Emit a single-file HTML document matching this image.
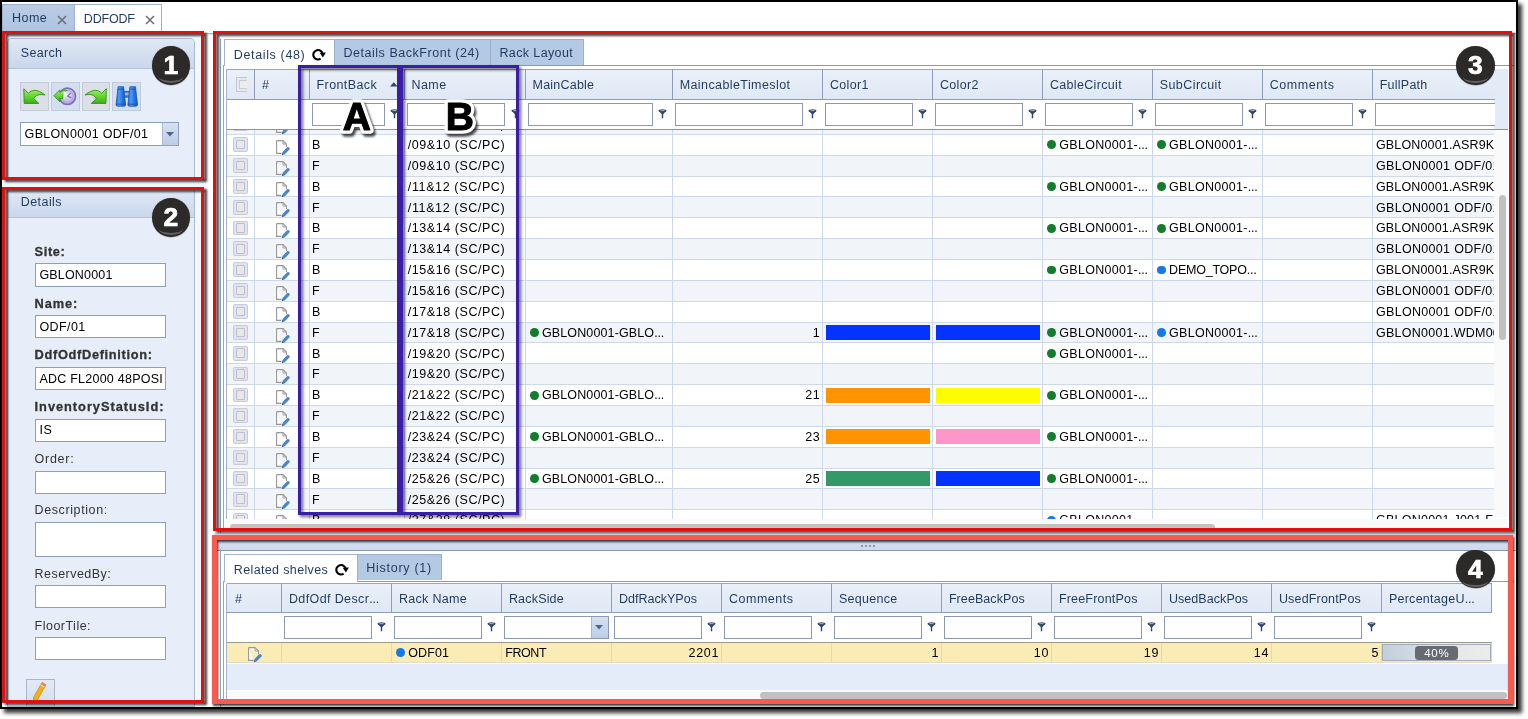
<!DOCTYPE html>
<html><head><meta charset="utf-8"><title>DDFODF</title>
<style>
*{box-sizing:border-box;margin:0;padding:0}
html,body{width:1528px;height:719px;overflow:hidden;background:#fff}
body{font-family:"Liberation Sans",sans-serif;font-size:12.5px;color:#000;position:relative}
#w{left:0;top:0;width:1528px;height:719px;will-change:transform}
.a{position:absolute}
.t{position:absolute;white-space:nowrap;line-height:16px;height:16px}
#frame{left:0;top:0;width:1518px;height:709px;border:2px solid #000;background:#fff;box-shadow:4px 4px 4px rgba(0,0,0,.8)}
.tab{top:3.5px;height:27px;border:1px solid #9db1cf;border-bottom:none}
.hd{color:#1f3a5f}
.panel{border:1px solid #a3b6d3;background:#e8eef9}
.phead{left:0;top:0;right:0;height:30px;background:linear-gradient(#e0e8f5,#cad7eb);border-bottom:1px solid #b4c3dc}
.btn{width:28.5px;height:28.5px;top:82px;border:1px solid #c2cbdb}
.inp{background:#fff;border:1px solid #8e9fbc;height:23px}
.red{border:3.3px solid #e01010;filter:drop-shadow(3px 2px 1px rgba(0,0,0,.75))}
.red4{border:5px solid #fa5a4d;filter:drop-shadow(1.5px 2px .8px rgba(0,0,0,.75))}
.blue{border:3.4px solid #3a1ea8;filter:drop-shadow(2px 2px 1.5px rgba(0,0,0,.6))}
.circ{width:38.4px;height:38.8px;border-radius:50%;background:#2b2a29;box-shadow:0 .5px 1px rgba(0,0,0,.4)}
.circ b{position:absolute;left:0;right:0;top:0;color:#fff;font-weight:bold;font-size:26.5px;line-height:38.8px;text-align:center;-webkit-text-stroke:.7px #fff}
.circ:after{content:"";position:absolute;left:7px;right:7px;bottom:1.3px;height:10px;border-bottom:2px solid #626262;border-radius:50%}
.gh{height:30.5px;background:linear-gradient(#eaf0f9,#dfe8f5);border-right:1px solid #98a7c3;border-bottom:1px solid #8d9cb9;border-top:1px solid #98a7c3}
.fi{background:#fff;border:1px solid #8e98b0;height:23px}
.row{left:0;height:20.86px;border-bottom:1px solid #cdd8ea}
.cell{top:0;height:20.86px;border-right:1px solid #cdd8ea;overflow:hidden}
.cell .t{top:2.2px}
.alt{background:#f1f4f9}
.dot{position:absolute;width:8.8px;height:8.8px;border-radius:50%;top:5.6px;left:4.8px}
.g{background:#127d2c}.bl{background:#1479ea}
.bar{position:absolute;left:3px;right:2px;top:2.5px;height:15px}
.cb{left:6.6px;top:2.4px;width:14.8px;height:14.8px;border:1px solid #c6cad9;background:#e1e4ee;border-radius:1.5px}
.cb:after{content:"";position:absolute;left:1.6px;top:1.6px;right:1.6px;bottom:1.6px;border:1px solid #bcc0cd;background:#e8e8ec;border-radius:1px}
.bl2{-webkit-text-stroke:.3px #333}
.big{font-weight:bold;font-size:40px;letter-spacing:0;line-height:40px;height:40px}
.big.o{color:#fff;-webkit-text-stroke:7px #fff;filter:drop-shadow(2px 3px 1.5px rgba(0,0,0,.65))}
.big.f{color:#000;-webkit-text-stroke:1px #000}
</style></head>
<body>
<div id="w" class="a">
<div id="frame" class="a"></div>
<div class="a" style="left:2px;top:32.5px;width:1514px;height:3px;background:#e6edf8;border-top:1px solid #9db1cf"></div>
<div class="a tab" style="left:2px;width:73px;background:linear-gradient(#b9cce5,#aec4e0)"></div>
<div class="a tab" style="left:74px;width:88px;background:#fff"></div>
<div class="t hd" style="top:9.5px;font-size:12.5px;left:12px"><span style="letter-spacing:0.45px">Home</span></div>
<div class="t hd" style="top:10.9px;font-size:12.5px;left:83.8px"><span style="letter-spacing:-0.18px">DDFODF</span></div>
<svg class="a" style="left:56.5px;top:15px" width="10" height="10" viewBox="0 0 10 10"><path d="M1 1l8 8M9 1l-8 8" stroke="#6b6f78" stroke-width="1.600"/></svg>
<svg class="a" style="left:144.5px;top:15px" width="10" height="10" viewBox="0 0 10 10"><path d="M1 1l8 8M9 1l-8 8" stroke="#6b6f78" stroke-width="1.600"/></svg>
<div class="a" style="left:2px;top:35px;width:204px;height:672px;background:#f3f6fb"></div>
<div class="a" style="left:205.5px;top:35px;width:8px;height:672px;background:#fff"></div>
<div class="a panel" style="left:7px;top:38px;width:187.800px;height:142px;border-bottom:none;border-radius:5px 5px 0 0;border-color:#aab9d4"><div class="a phead" style="border-radius:4px 4px 0 0"></div></div>
<div class="t hd" style="top:45.4px;font-size:12.5px;left:20.8px"><span style="letter-spacing:0.32px">Search</span></div>
<div class="a btn" style="left:20px;width:28.5px;background:#dcdfe6"></div>
<div class="a btn" style="left:51.2px;width:28.5px;background:#d3deef"></div>
<div class="a btn" style="left:82.2px;width:27.5px;background:#dcdfe6"></div>
<div class="a btn" style="left:112.2px;width:28.5px;background:#d3deef"></div>
<svg width="0" height="0" class="a"><defs><linearGradient id="gg" x1="0" y1="0" x2="0" y2="1"><stop offset="0" stop-color="#a6f070"/><stop offset=".55" stop-color="#5fd52c"/><stop offset="1" stop-color="#3fae18"/></linearGradient><linearGradient id="bb" x1="0" y1="0" x2="1" y2="0"><stop offset="0" stop-color="#1b5fc9"/><stop offset=".3" stop-color="#4b9bff"/><stop offset=".6" stop-color="#2a7be8"/><stop offset="1" stop-color="#1854b8"/></linearGradient><radialGradient id="pp" cx=".45" cy=".4" r=".6"><stop offset="0" stop-color="#ece8fa"/><stop offset=".7" stop-color="#c4b9ea"/><stop offset="1" stop-color="#a89ad8"/></radialGradient></defs></svg>
<svg class="a" style="left:20.2px;top:82.2px" width="28.500" height="28.500" viewBox="0 0 28.500 28.500"><path d="M3.800 6.700L8.400 11.300C11.200 8 17 6.300 25.100 13C19.500 11.600 15.600 13 13.800 16.800L18.800 21.400H4.200z" fill="url(#gg)" stroke="#2f8d14" stroke-width=".9" stroke-linejoin="round"/></svg>
<svg class="a" style="left:51.3px;top:82.2px" width="28.500" height="28.500" viewBox="0 0 28.500 28.500"><circle cx="16.400" cy="14.300" r="8.200" fill="url(#pp)" stroke="#7d6db8" stroke-width="1.600"/><circle cx="16.400" cy="14.300" r="5.700" fill="none" stroke="#b3a7e0" stroke-width="1"/><path d="M16.400 14.300l3.300-3.500M16.400 14.300l3.800 1.300" stroke="#7a6bb3" stroke-width="1.200"/><path d="M2.900 13.800L8.800 7.900V10.600C11 8.600 13.500 8 16.200 8.400C13.600 10 12 12.500 11.600 16.600L8.800 16.600V19.800z" fill="url(#gg)" stroke="#2f8d14" stroke-width=".8" stroke-linejoin="round"/><path d="M12.400 10.600l3.400-1.600-2 3.400 2.200.3-3.400 3z" fill="#f6fff2"/></svg>
<svg class="a" style="left:82.1px;top:82.2px" width="28.500" height="28.500" viewBox="0 0 28.500 28.500"><g transform="translate(28.100 0) scale(-1 1)"><path d="M3.800 6.700L8.400 11.300C11.200 8 17 6.300 25.100 13C19.500 11.600 15.600 13 13.800 16.800L18.800 21.400H4.200z" fill="url(#gg)" stroke="#2f8d14" stroke-width=".9" stroke-linejoin="round"/></g></svg>
<svg class="a" style="left:112.2px;top:82.2px" width="28.500" height="28.500" viewBox="0 0 28.500 28.500"><rect x="10.800" y="9.200" width="7.400" height="6" fill="#2a7be8" stroke="#154fae" stroke-width=".6"/><rect x="11.900" y="10.600" width="5.200" height="2.800" fill="#a9b1c2" stroke="#6f7a92" stroke-width=".5"/><path d="M6 4.700h5.600l2 17.600c.1 1.300-.5 2-1.700 2H5.900c-1.200 0-1.900-.7-1.800-2z" fill="url(#bb)" stroke="#154fae" stroke-width=".7"/><path d="M17.900 4.700h5.600l2 17.600c.1 1.300-.6 2-1.800 2h-6.100c-1.200 0-1.800-.7-1.700-2z" fill="url(#bb)" stroke="#154fae" stroke-width=".7"/><path d="M5.700 7.200h6.200M17.600 7.200h6.200M4.200 22.200h9.400M15.900 22.200h9.600" stroke="#1650b0" stroke-width=".8"/></svg>
<div class="a inp" style="left:20px;top:122.3px;width:159px;height:23.400px"></div>
<div class="t " style="top:126px;font-size:12.5px;left:24.6px"><span style="letter-spacing:0.31px">GBLON0001 ODF/01</span></div>
<div class="a" style="left:161.5px;top:123.3px;width:16.500px;height:21.400px;background:linear-gradient(#d6e1f1,#bccde6);border-left:1px solid #a9b9d3"></div>
<svg class="a" style="left:166px;top:131.5px" width="8" height="5" viewBox="0 0 8 5"><path d="M0 0h8l-4 4.500z" fill="#4c6690"/></svg>
<div class="a panel" style="left:7px;top:190px;width:187.800px;height:517px;border-color:#aab9d4;border-top:none;background:#e8eef9"><div class="a phead" style="height:28px"></div></div>
<div class="t hd" style="top:194.4px;font-size:12.5px;left:20.8px"><span style="letter-spacing:0.42px">Details</span></div>
<div class="t bl2" style="top:243.7px;font-size:12.8px;left:34.6px;font-weight:bold;color:#333"><span style="letter-spacing:0.63px">Site:</span></div>
<div class="a inp" style="left:34.8px;top:263.3px;width:131px;height:23.4px;overflow:hidden"><div class="t " style="top:2.7px;font-size:12.5px;left:3.6px"><span style="letter-spacing:0.18px">GBLON0001</span></div></div>
<div class="t bl2" style="top:295.7px;font-size:12.8px;left:34.6px;font-weight:bold;color:#333"><span style="letter-spacing:0.91px">Name:</span></div>
<div class="a inp" style="left:34.8px;top:315px;width:131px;height:23.4px;overflow:hidden"><div class="t " style="top:2.7px;font-size:12.5px;left:3.6px"><span style="letter-spacing:0.42px">ODF/01</span></div></div>
<div class="t bl2" style="top:346.7px;font-size:12.8px;left:34.6px;font-weight:bold;color:#333"><span style="letter-spacing:0.67px">DdfOdfDefinition:</span></div>
<div class="a inp" style="left:34.8px;top:367px;width:131px;height:23.4px;overflow:hidden"><div class="t " style="top:2.7px;font-size:12.5px;left:3.6px"><span style="letter-spacing:0.24px">ADC FL2000 48POSI</span></div></div>
<div class="t bl2" style="top:398.7px;font-size:12.8px;left:34.6px;font-weight:bold;color:#333"><span style="letter-spacing:0.97px">InventoryStatusId:</span></div>
<div class="a inp" style="left:34.8px;top:418.8px;width:131px;height:23.4px;overflow:hidden"><div class="t " style="top:2.7px;font-size:12.5px;left:3.6px"><span style="letter-spacing:0.72px">IS</span></div></div>
<div class="t " style="top:450.7px;font-size:12.5px;left:34.6px;color:#333"><span style="letter-spacing:0.72px">Order:</span></div>
<div class="a inp" style="left:34.8px;top:470.5px;width:131px;height:23.4px;overflow:hidden"></div>
<div class="t " style="top:502.2px;font-size:12.5px;left:34.6px;color:#333"><span style="letter-spacing:0.60px">Description:</span></div>
<div class="a inp" style="left:34.8px;top:522px;width:131px;height:34.5px;overflow:hidden"></div>
<div class="t " style="top:565.7px;font-size:12.5px;left:34.6px;color:#333"><span style="letter-spacing:0.45px">ReservedBy:</span></div>
<div class="a inp" style="left:34.8px;top:585px;width:131px;height:23.4px;overflow:hidden"></div>
<div class="t " style="top:617.7px;font-size:12.5px;left:34.6px;color:#333"><span style="letter-spacing:0.48px">FloorTile:</span></div>
<div class="a inp" style="left:34.8px;top:637px;width:131px;height:23.4px;overflow:hidden"></div>
<div class="a" style="left:26.2px;top:679.3px;width:28.700px;height:28px;border:1px solid #a9b6cc;background:linear-gradient(#e3eaf6,#d3deef)"></div>
<svg class="a" style="left:32px;top:681px" width="16" height="20" viewBox="0 0 16 20"><path d="M10 1.500l4 2.200-8.500 15-3.800 1.800-.2-4z" fill="#f2b01e" stroke="#c98508" stroke-width=".7"/><path d="M10 1.500l4 2.200-1.200 2.100-4-2.200z" fill="#e88478"/><path d="M8.600 3.900l4 2.200" stroke="#eee" stroke-width="1"/></svg>
<div class="a" style="left:214px;top:35px;width:1302px;height:505px;background:#fff"></div>
<div class="a" style="left:220px;top:38.5px;width:1296px;height:495px;border-left:1px solid #8fa3c4;background:#fff"></div>
<div class="a" style="left:223.1px;top:65px;width:1px;height:466px;background:#97a3b9"></div>
<div class="a" style="left:224px;top:64.8px;width:1290px;height:1px;background:#8c9ab3"></div>
<div class="a" style="left:224.3px;top:38.8px;width:110.500px;height:27.700px;background:#fff;border:1px solid #a3b4d0;border-bottom:none"></div>
<div class="t hd" style="top:46.9px;font-size:12.5px;left:233.8px"><span style="letter-spacing:0.64px">Details (48)</span></div>
<svg class="a" style="left:312px;top:47.8px" width="15" height="14" viewBox="0 0 15 14"><path d="M8.600 10.700A4.700 4.700 0 1 1 10.700 6.200" fill="none" stroke="#000" stroke-width="2.100"/><path d="M7.700 4.700l6.200-.2-3 4.900z" fill="#000"/></svg>
<div class="a" style="left:334.3px;top:38.8px;width:156.500px;height:26.200px;background:#b4c9e4;border:1px solid #9db1cf;border-bottom:none"></div>
<div class="t hd" style="top:45.4px;font-size:12.5px;left:343.4px"><span style="letter-spacing:0.54px">Details BackFront (24)</span></div>
<div class="a" style="left:489.8px;top:38.8px;width:94px;height:26.200px;background:#b4c9e4;border:1px solid #9db1cf;border-bottom:none"></div>
<div class="t hd" style="top:45.4px;font-size:12.5px;left:499.4px"><span style="letter-spacing:0.39px">Rack Layout</span></div>
<div class="a" style="left:226.5px;top:69px;width:1281.5px;height:61px;background:#e3ebf7;border-bottom:1px solid #8492ae"></div>
<div class="a" style="left:226.5px;top:99.5px;width:1267.5px;height:29.900px;background:#fff"></div>
<div class="a" style="left:226.0px;top:69px;width:1px;height:450px;background:#a3b3cf"></div>
<div class="a gh" style="left:226.7px;top:69px;width:28.4px"></div>
<div class="a gh" style="left:254.5px;top:69px;width:55.5px"></div>
<div class="t hd" style="top:76.5px;font-size:12.5px;left:262.1px"><span style="letter-spacing:2.86px">#</span></div>
<div class="a gh" style="left:309.4px;top:69px;width:95.5px"></div>
<div class="t hd" style="top:76.5px;font-size:12.5px;left:316.59999999999997px"><span style="letter-spacing:0.39px">FrontBack</span></div>
<div class="a gh" style="left:404.3px;top:69px;width:121.6px"></div>
<div class="t hd" style="top:76.5px;font-size:12.5px;left:411.5px"><span style="letter-spacing:0.42px">Name</span></div>
<div class="a gh" style="left:525.3px;top:69px;width:147.8px"></div>
<div class="t hd" style="top:76.5px;font-size:12.5px;left:532.5px"><span style="letter-spacing:0.22px">MainCable</span></div>
<div class="a gh" style="left:672.5px;top:69px;width:150.8px"></div>
<div class="t hd" style="top:76.5px;font-size:12.5px;left:679.7px"><span style="letter-spacing:0.41px">MaincableTimeslot</span></div>
<div class="a gh" style="left:822.7px;top:69px;width:110.6px"></div>
<div class="t hd" style="top:76.5px;font-size:12.5px;left:829.9000000000001px"><span style="letter-spacing:0.36px">Color1</span></div>
<div class="a gh" style="left:932.7px;top:69px;width:110.6px"></div>
<div class="t hd" style="top:76.5px;font-size:12.5px;left:939.9000000000001px"><span style="letter-spacing:0.36px">Color2</span></div>
<div class="a gh" style="left:1042.7px;top:69px;width:110.4px"></div>
<div class="t hd" style="top:76.5px;font-size:12.5px;left:1049.9px"><span style="letter-spacing:0.34px">CableCircuit</span></div>
<div class="a gh" style="left:1152.5px;top:69px;width:110.6px"></div>
<div class="t hd" style="top:76.5px;font-size:12.5px;left:1159.7px"><span style="letter-spacing:0.43px">SubCircuit</span></div>
<div class="a gh" style="left:1262.5px;top:69px;width:110.6px"></div>
<div class="t hd" style="top:76.5px;font-size:12.5px;left:1269.7px"><span style="letter-spacing:0.54px">Comments</span></div>
<div class="a gh" style="left:1372.5px;top:69px;width:122.1px;border-right:none"></div>
<div class="t hd" style="top:76.5px;font-size:12.5px;left:1379.7px"><span style="letter-spacing:0.25px">FullPath</span></div>
<div class="a" style="left:254.0px;top:69px;width:1px;height:30.500px;background:#8f9dba"></div>
<div class="a" style="left:308.9px;top:69px;width:1px;height:30.500px;background:#8f9dba"></div>
<div class="a" style="left:403.8px;top:69px;width:1px;height:30.500px;background:#8f9dba"></div>
<div class="a" style="left:524.8px;top:69px;width:1px;height:30.500px;background:#8f9dba"></div>
<div class="a" style="left:672.0px;top:69px;width:1px;height:30.500px;background:#8f9dba"></div>
<div class="a" style="left:822.2px;top:69px;width:1px;height:30.500px;background:#8f9dba"></div>
<div class="a" style="left:932.2px;top:69px;width:1px;height:30.500px;background:#8f9dba"></div>
<div class="a" style="left:1042.2px;top:69px;width:1px;height:30.500px;background:#8f9dba"></div>
<div class="a" style="left:1152.0px;top:69px;width:1px;height:30.500px;background:#8f9dba"></div>
<div class="a" style="left:1262.0px;top:69px;width:1px;height:30.500px;background:#8f9dba"></div>
<div class="a" style="left:1372.0px;top:69px;width:1px;height:30.500px;background:#8f9dba"></div>
<div class="a" style="left:236.3px;top:77.3px;width:11px;height:14.500px;border:1px solid #c3c9d6;border-right:none;background:#e4e8f0"><div class="a" style="left:1.500px;top:1.500px;right:0;bottom:1.500px;border:1px solid #c8ccd6;border-right:none;background:#eeeee8"></div></div>
<svg class="a" style="left:389.8px;top:82.2px" width="8" height="5" viewBox="0 0 8 5"><path d="M0 4.500h7.600l-3.800-4.300z" fill="#2b466f"/></svg>
<div class="a fi" style="left:312.0px;top:103.2px;width:72.50000000000003px;height:22.800px"></div>
<svg class="a" style="left:389.5px;top:108.8px" width="9" height="10" viewBox="0 0 9 10"><path d="M.6 1.6h7.800L5.200 5.300v3.900h-1.400V5.300z" fill="#2f4566"/><ellipse cx="4.500" cy="1.700" rx="3.900" ry="1.500" fill="#33496b"/><ellipse cx="4.500" cy="1.500" rx="2.300" ry=".7" fill="#94a4bd"/></svg>
<div class="a fi" style="left:406.90000000000003px;top:103.2px;width:98.59999999999994px;height:22.800px"></div>
<svg class="a" style="left:510.49999999999994px;top:108.8px" width="9" height="10" viewBox="0 0 9 10"><path d="M.6 1.6h7.800L5.200 5.300v3.900h-1.400V5.300z" fill="#2f4566"/><ellipse cx="4.500" cy="1.700" rx="3.900" ry="1.500" fill="#33496b"/><ellipse cx="4.500" cy="1.500" rx="2.300" ry=".7" fill="#94a4bd"/></svg>
<div class="a fi" style="left:527.9px;top:103.2px;width:124.8000000000001px;height:22.800px"></div>
<svg class="a" style="left:657.7px;top:108.8px" width="9" height="10" viewBox="0 0 9 10"><path d="M.6 1.6h7.800L5.200 5.300v3.900h-1.400V5.300z" fill="#2f4566"/><ellipse cx="4.500" cy="1.700" rx="3.900" ry="1.500" fill="#33496b"/><ellipse cx="4.500" cy="1.500" rx="2.300" ry=".7" fill="#94a4bd"/></svg>
<div class="a fi" style="left:675.1px;top:103.2px;width:127.8000000000001px;height:22.800px"></div>
<svg class="a" style="left:807.9000000000001px;top:108.8px" width="9" height="10" viewBox="0 0 9 10"><path d="M.6 1.6h7.800L5.200 5.300v3.900h-1.400V5.300z" fill="#2f4566"/><ellipse cx="4.500" cy="1.700" rx="3.900" ry="1.500" fill="#33496b"/><ellipse cx="4.500" cy="1.500" rx="2.300" ry=".7" fill="#94a4bd"/></svg>
<div class="a fi" style="left:825.3000000000001px;top:103.2px;width:87.60000000000005px;height:22.800px"></div>
<svg class="a" style="left:917.9000000000001px;top:108.8px" width="9" height="10" viewBox="0 0 9 10"><path d="M.6 1.6h7.800L5.200 5.300v3.900h-1.400V5.300z" fill="#2f4566"/><ellipse cx="4.500" cy="1.700" rx="3.900" ry="1.500" fill="#33496b"/><ellipse cx="4.500" cy="1.500" rx="2.300" ry=".7" fill="#94a4bd"/></svg>
<div class="a fi" style="left:935.3000000000001px;top:103.2px;width:87.60000000000005px;height:22.800px"></div>
<svg class="a" style="left:1027.9px;top:108.8px" width="9" height="10" viewBox="0 0 9 10"><path d="M.6 1.6h7.800L5.200 5.300v3.900h-1.400V5.300z" fill="#2f4566"/><ellipse cx="4.500" cy="1.700" rx="3.900" ry="1.500" fill="#33496b"/><ellipse cx="4.500" cy="1.500" rx="2.300" ry=".7" fill="#94a4bd"/></svg>
<div class="a fi" style="left:1045.3px;top:103.2px;width:87.4px;height:22.800px"></div>
<svg class="a" style="left:1137.7px;top:108.8px" width="9" height="10" viewBox="0 0 9 10"><path d="M.6 1.6h7.800L5.200 5.300v3.900h-1.400V5.300z" fill="#2f4566"/><ellipse cx="4.500" cy="1.700" rx="3.900" ry="1.500" fill="#33496b"/><ellipse cx="4.500" cy="1.500" rx="2.300" ry=".7" fill="#94a4bd"/></svg>
<div class="a fi" style="left:1155.1px;top:103.2px;width:87.60000000000005px;height:22.800px"></div>
<svg class="a" style="left:1247.7px;top:108.8px" width="9" height="10" viewBox="0 0 9 10"><path d="M.6 1.6h7.800L5.200 5.300v3.900h-1.400V5.300z" fill="#2f4566"/><ellipse cx="4.500" cy="1.700" rx="3.900" ry="1.500" fill="#33496b"/><ellipse cx="4.500" cy="1.500" rx="2.300" ry=".7" fill="#94a4bd"/></svg>
<div class="a fi" style="left:1265.1px;top:103.2px;width:87.60000000000005px;height:22.800px"></div>
<svg class="a" style="left:1357.7px;top:108.8px" width="9" height="10" viewBox="0 0 9 10"><path d="M.6 1.6h7.800L5.200 5.300v3.900h-1.400V5.300z" fill="#2f4566"/><ellipse cx="4.500" cy="1.700" rx="3.900" ry="1.500" fill="#33496b"/><ellipse cx="4.500" cy="1.500" rx="2.300" ry=".7" fill="#94a4bd"/></svg>
<div class="a fi" style="left:1375.1px;top:103.2px;width:119.9px;height:22.800px;border-right:none"></div>
<div class="a" style="left:226.5px;top:130px;width:1267.5px;height:388.5px;overflow:hidden;background:#fff">
<div class="a row alt" style="top:-16.06px;width:1267.5px">
<div class="a cell" style="left:0.2px;width:28.4px"><div class="a cb"></div></div>
<div class="a cell" style="left:28.0px;width:55.5px"><svg class="a" style="left:20.5px;top:4px" width="16" height="17" viewBox="0 0 16 17"><path d="M1.600 1.600h6.400l3.400 3.400v3M6.500 14.400h-4.900v-12.800" fill="#fff" stroke="#979797" stroke-width="1.100"/><path d="M8 1.600v3.400h3.400" fill="none" stroke="#9a9a9a" stroke-width="1"/><path d="M6.800 16l.8-3 4.200-4.600c.7-.7 1.700-.7 2.400 0s.7 1.700 0 2.400l-4.400 4.400z" fill="#4a86c8"/><path d="M6.800 16l.6-2 1.400 1.400z" fill="#2d5f9e"/></svg></div>
<div class="a cell" style="left:82.9px;width:95.5px"><div class="t " style="top:2.2px;font-size:12.5px;left:2.6px"><span style="letter-spacing:-0.74px">F</span></div></div>
<div class="a cell" style="left:177.8px;width:121.6px"><div class="t " style="top:2.2px;font-size:12.5px;left:3.5px"><span style="letter-spacing:0.56px">/07&amp;08 (SC/PC)</span></div></div>
<div class="a cell" style="left:298.8px;width:147.8px"></div>
<div class="a cell" style="left:446.0px;width:150.8px"></div>
<div class="a cell" style="left:596.2px;width:110.6px"></div>
<div class="a cell" style="left:706.2px;width:110.6px"></div>
<div class="a cell" style="left:816.2px;width:110.4px"></div>
<div class="a cell" style="left:926.0px;width:110.6px"></div>
<div class="a cell" style="left:1036.0px;width:110.6px"></div>
<div class="a cell" style="left:1146.0px;width:122.1px;border-right:none"></div>
</div>
<div class="a row" style="top:4.80px;width:1267.5px">
<div class="a cell" style="left:0.2px;width:28.4px"><div class="a cb"></div></div>
<div class="a cell" style="left:28.0px;width:55.5px"><svg class="a" style="left:20.5px;top:4px" width="16" height="17" viewBox="0 0 16 17"><path d="M1.600 1.600h6.400l3.400 3.400v3M6.500 14.400h-4.900v-12.800" fill="#fff" stroke="#979797" stroke-width="1.100"/><path d="M8 1.600v3.400h3.400" fill="none" stroke="#9a9a9a" stroke-width="1"/><path d="M6.800 16l.8-3 4.200-4.600c.7-.7 1.700-.7 2.400 0s.7 1.700 0 2.400l-4.400 4.400z" fill="#4a86c8"/><path d="M6.800 16l.6-2 1.400 1.400z" fill="#2d5f9e"/></svg></div>
<div class="a cell" style="left:82.9px;width:95.5px"><div class="t " style="top:2.2px;font-size:12.5px;left:2.6px"><span style="letter-spacing:-0.11px">B</span></div></div>
<div class="a cell" style="left:177.8px;width:121.6px"><div class="t " style="top:2.2px;font-size:12.5px;left:3.5px"><span style="letter-spacing:0.56px">/09&amp;10 (SC/PC)</span></div></div>
<div class="a cell" style="left:298.8px;width:147.8px"></div>
<div class="a cell" style="left:446.0px;width:150.8px"></div>
<div class="a cell" style="left:596.2px;width:110.6px"></div>
<div class="a cell" style="left:706.2px;width:110.6px"></div>
<div class="a cell" style="left:816.2px;width:110.4px"><div class="dot g"></div><div class="t " style="top:2.2px;font-size:12.5px;left:16.6px"><span style="letter-spacing:0.29px">GBLON0001-</span><span style="letter-spacing:-0.20px">...</span></div></div>
<div class="a cell" style="left:926.0px;width:110.6px"><div class="dot g"></div><div class="t " style="top:2.2px;font-size:12.5px;left:16.6px"><span style="letter-spacing:0.29px">GBLON0001-</span><span style="letter-spacing:-0.20px">...</span></div></div>
<div class="a cell" style="left:1036.0px;width:110.6px"></div>
<div class="a cell" style="left:1146.0px;width:122.1px;border-right:none"><div class="t " style="top:2.2px;font-size:12.5px;left:3.5px"><span style="letter-spacing:0.15px">GBLON0001.ASR9K</span></div></div>
</div>
<div class="a row alt" style="top:25.66px;width:1267.5px">
<div class="a cell" style="left:0.2px;width:28.4px"><div class="a cb"></div></div>
<div class="a cell" style="left:28.0px;width:55.5px"><svg class="a" style="left:20.5px;top:4px" width="16" height="17" viewBox="0 0 16 17"><path d="M1.600 1.600h6.400l3.400 3.400v3M6.500 14.400h-4.900v-12.800" fill="#fff" stroke="#979797" stroke-width="1.100"/><path d="M8 1.600v3.400h3.400" fill="none" stroke="#9a9a9a" stroke-width="1"/><path d="M6.800 16l.8-3 4.200-4.600c.7-.7 1.700-.7 2.400 0s.7 1.700 0 2.400l-4.400 4.400z" fill="#4a86c8"/><path d="M6.800 16l.6-2 1.400 1.400z" fill="#2d5f9e"/></svg></div>
<div class="a cell" style="left:82.9px;width:95.5px"><div class="t " style="top:2.2px;font-size:12.5px;left:2.6px"><span style="letter-spacing:-0.74px">F</span></div></div>
<div class="a cell" style="left:177.8px;width:121.6px"><div class="t " style="top:2.2px;font-size:12.5px;left:3.5px"><span style="letter-spacing:0.56px">/09&amp;10 (SC/PC)</span></div></div>
<div class="a cell" style="left:298.8px;width:147.8px"></div>
<div class="a cell" style="left:446.0px;width:150.8px"></div>
<div class="a cell" style="left:596.2px;width:110.6px"></div>
<div class="a cell" style="left:706.2px;width:110.6px"></div>
<div class="a cell" style="left:816.2px;width:110.4px"></div>
<div class="a cell" style="left:926.0px;width:110.6px"></div>
<div class="a cell" style="left:1036.0px;width:110.6px"></div>
<div class="a cell" style="left:1146.0px;width:122.1px;border-right:none"><div class="t " style="top:2.2px;font-size:12.5px;left:3.5px"><span style="letter-spacing:0.31px">GBLON0001 ODF/01</span></div></div>
</div>
<div class="a row" style="top:46.52px;width:1267.5px">
<div class="a cell" style="left:0.2px;width:28.4px"><div class="a cb"></div></div>
<div class="a cell" style="left:28.0px;width:55.5px"><svg class="a" style="left:20.5px;top:4px" width="16" height="17" viewBox="0 0 16 17"><path d="M1.600 1.600h6.400l3.400 3.400v3M6.500 14.400h-4.900v-12.800" fill="#fff" stroke="#979797" stroke-width="1.100"/><path d="M8 1.600v3.400h3.400" fill="none" stroke="#9a9a9a" stroke-width="1"/><path d="M6.800 16l.8-3 4.200-4.600c.7-.7 1.700-.7 2.400 0s.7 1.700 0 2.400l-4.400 4.400z" fill="#4a86c8"/><path d="M6.800 16l.6-2 1.400 1.400z" fill="#2d5f9e"/></svg></div>
<div class="a cell" style="left:82.9px;width:95.5px"><div class="t " style="top:2.2px;font-size:12.5px;left:2.6px"><span style="letter-spacing:-0.11px">B</span></div></div>
<div class="a cell" style="left:177.8px;width:121.6px"><div class="t " style="top:2.2px;font-size:12.5px;left:3.5px"><span style="letter-spacing:0.63px">/11&amp;12 (SC/PC)</span></div></div>
<div class="a cell" style="left:298.8px;width:147.8px"></div>
<div class="a cell" style="left:446.0px;width:150.8px"></div>
<div class="a cell" style="left:596.2px;width:110.6px"></div>
<div class="a cell" style="left:706.2px;width:110.6px"></div>
<div class="a cell" style="left:816.2px;width:110.4px"><div class="dot g"></div><div class="t " style="top:2.2px;font-size:12.5px;left:16.6px"><span style="letter-spacing:0.29px">GBLON0001-</span><span style="letter-spacing:-0.20px">...</span></div></div>
<div class="a cell" style="left:926.0px;width:110.6px"><div class="dot g"></div><div class="t " style="top:2.2px;font-size:12.5px;left:16.6px"><span style="letter-spacing:0.29px">GBLON0001-</span><span style="letter-spacing:-0.20px">...</span></div></div>
<div class="a cell" style="left:1036.0px;width:110.6px"></div>
<div class="a cell" style="left:1146.0px;width:122.1px;border-right:none"><div class="t " style="top:2.2px;font-size:12.5px;left:3.5px"><span style="letter-spacing:0.15px">GBLON0001.ASR9K</span></div></div>
</div>
<div class="a row alt" style="top:67.38px;width:1267.5px">
<div class="a cell" style="left:0.2px;width:28.4px"><div class="a cb"></div></div>
<div class="a cell" style="left:28.0px;width:55.5px"><svg class="a" style="left:20.5px;top:4px" width="16" height="17" viewBox="0 0 16 17"><path d="M1.600 1.600h6.400l3.400 3.400v3M6.500 14.400h-4.900v-12.800" fill="#fff" stroke="#979797" stroke-width="1.100"/><path d="M8 1.600v3.400h3.400" fill="none" stroke="#9a9a9a" stroke-width="1"/><path d="M6.800 16l.8-3 4.200-4.600c.7-.7 1.700-.7 2.400 0s.7 1.700 0 2.400l-4.400 4.400z" fill="#4a86c8"/><path d="M6.800 16l.6-2 1.400 1.400z" fill="#2d5f9e"/></svg></div>
<div class="a cell" style="left:82.9px;width:95.5px"><div class="t " style="top:2.2px;font-size:12.5px;left:2.6px"><span style="letter-spacing:-0.74px">F</span></div></div>
<div class="a cell" style="left:177.8px;width:121.6px"><div class="t " style="top:2.2px;font-size:12.5px;left:3.5px"><span style="letter-spacing:0.63px">/11&amp;12 (SC/PC)</span></div></div>
<div class="a cell" style="left:298.8px;width:147.8px"></div>
<div class="a cell" style="left:446.0px;width:150.8px"></div>
<div class="a cell" style="left:596.2px;width:110.6px"></div>
<div class="a cell" style="left:706.2px;width:110.6px"></div>
<div class="a cell" style="left:816.2px;width:110.4px"></div>
<div class="a cell" style="left:926.0px;width:110.6px"></div>
<div class="a cell" style="left:1036.0px;width:110.6px"></div>
<div class="a cell" style="left:1146.0px;width:122.1px;border-right:none"><div class="t " style="top:2.2px;font-size:12.5px;left:3.5px"><span style="letter-spacing:0.31px">GBLON0001 ODF/01</span></div></div>
</div>
<div class="a row" style="top:88.24px;width:1267.5px">
<div class="a cell" style="left:0.2px;width:28.4px"><div class="a cb"></div></div>
<div class="a cell" style="left:28.0px;width:55.5px"><svg class="a" style="left:20.5px;top:4px" width="16" height="17" viewBox="0 0 16 17"><path d="M1.600 1.600h6.400l3.400 3.400v3M6.500 14.400h-4.900v-12.800" fill="#fff" stroke="#979797" stroke-width="1.100"/><path d="M8 1.600v3.400h3.400" fill="none" stroke="#9a9a9a" stroke-width="1"/><path d="M6.800 16l.8-3 4.200-4.600c.7-.7 1.700-.7 2.400 0s.7 1.700 0 2.400l-4.400 4.400z" fill="#4a86c8"/><path d="M6.800 16l.6-2 1.400 1.400z" fill="#2d5f9e"/></svg></div>
<div class="a cell" style="left:82.9px;width:95.5px"><div class="t " style="top:2.2px;font-size:12.5px;left:2.6px"><span style="letter-spacing:-0.11px">B</span></div></div>
<div class="a cell" style="left:177.8px;width:121.6px"><div class="t " style="top:2.2px;font-size:12.5px;left:3.5px"><span style="letter-spacing:0.56px">/13&amp;14 (SC/PC)</span></div></div>
<div class="a cell" style="left:298.8px;width:147.8px"></div>
<div class="a cell" style="left:446.0px;width:150.8px"></div>
<div class="a cell" style="left:596.2px;width:110.6px"></div>
<div class="a cell" style="left:706.2px;width:110.6px"></div>
<div class="a cell" style="left:816.2px;width:110.4px"><div class="dot g"></div><div class="t " style="top:2.2px;font-size:12.5px;left:16.6px"><span style="letter-spacing:0.29px">GBLON0001-</span><span style="letter-spacing:-0.20px">...</span></div></div>
<div class="a cell" style="left:926.0px;width:110.6px"><div class="dot g"></div><div class="t " style="top:2.2px;font-size:12.5px;left:16.6px"><span style="letter-spacing:0.29px">GBLON0001-</span><span style="letter-spacing:-0.20px">...</span></div></div>
<div class="a cell" style="left:1036.0px;width:110.6px"></div>
<div class="a cell" style="left:1146.0px;width:122.1px;border-right:none"><div class="t " style="top:2.2px;font-size:12.5px;left:3.5px"><span style="letter-spacing:0.15px">GBLON0001.ASR9K</span></div></div>
</div>
<div class="a row alt" style="top:109.10px;width:1267.5px">
<div class="a cell" style="left:0.2px;width:28.4px"><div class="a cb"></div></div>
<div class="a cell" style="left:28.0px;width:55.5px"><svg class="a" style="left:20.5px;top:4px" width="16" height="17" viewBox="0 0 16 17"><path d="M1.600 1.600h6.400l3.400 3.400v3M6.500 14.400h-4.900v-12.800" fill="#fff" stroke="#979797" stroke-width="1.100"/><path d="M8 1.600v3.400h3.400" fill="none" stroke="#9a9a9a" stroke-width="1"/><path d="M6.800 16l.8-3 4.200-4.600c.7-.7 1.700-.7 2.400 0s.7 1.700 0 2.400l-4.400 4.400z" fill="#4a86c8"/><path d="M6.800 16l.6-2 1.400 1.400z" fill="#2d5f9e"/></svg></div>
<div class="a cell" style="left:82.9px;width:95.5px"><div class="t " style="top:2.2px;font-size:12.5px;left:2.6px"><span style="letter-spacing:-0.74px">F</span></div></div>
<div class="a cell" style="left:177.8px;width:121.6px"><div class="t " style="top:2.2px;font-size:12.5px;left:3.5px"><span style="letter-spacing:0.56px">/13&amp;14 (SC/PC)</span></div></div>
<div class="a cell" style="left:298.8px;width:147.8px"></div>
<div class="a cell" style="left:446.0px;width:150.8px"></div>
<div class="a cell" style="left:596.2px;width:110.6px"></div>
<div class="a cell" style="left:706.2px;width:110.6px"></div>
<div class="a cell" style="left:816.2px;width:110.4px"></div>
<div class="a cell" style="left:926.0px;width:110.6px"></div>
<div class="a cell" style="left:1036.0px;width:110.6px"></div>
<div class="a cell" style="left:1146.0px;width:122.1px;border-right:none"><div class="t " style="top:2.2px;font-size:12.5px;left:3.5px"><span style="letter-spacing:0.31px">GBLON0001 ODF/01</span></div></div>
</div>
<div class="a row" style="top:129.96px;width:1267.5px">
<div class="a cell" style="left:0.2px;width:28.4px"><div class="a cb"></div></div>
<div class="a cell" style="left:28.0px;width:55.5px"><svg class="a" style="left:20.5px;top:4px" width="16" height="17" viewBox="0 0 16 17"><path d="M1.600 1.600h6.400l3.400 3.400v3M6.500 14.400h-4.900v-12.800" fill="#fff" stroke="#979797" stroke-width="1.100"/><path d="M8 1.600v3.400h3.400" fill="none" stroke="#9a9a9a" stroke-width="1"/><path d="M6.800 16l.8-3 4.200-4.600c.7-.7 1.700-.7 2.400 0s.7 1.700 0 2.400l-4.400 4.400z" fill="#4a86c8"/><path d="M6.800 16l.6-2 1.400 1.400z" fill="#2d5f9e"/></svg></div>
<div class="a cell" style="left:82.9px;width:95.5px"><div class="t " style="top:2.2px;font-size:12.5px;left:2.6px"><span style="letter-spacing:-0.11px">B</span></div></div>
<div class="a cell" style="left:177.8px;width:121.6px"><div class="t " style="top:2.2px;font-size:12.5px;left:3.5px"><span style="letter-spacing:0.56px">/15&amp;16 (SC/PC)</span></div></div>
<div class="a cell" style="left:298.8px;width:147.8px"></div>
<div class="a cell" style="left:446.0px;width:150.8px"></div>
<div class="a cell" style="left:596.2px;width:110.6px"></div>
<div class="a cell" style="left:706.2px;width:110.6px"></div>
<div class="a cell" style="left:816.2px;width:110.4px"><div class="dot g"></div><div class="t " style="top:2.2px;font-size:12.5px;left:16.6px"><span style="letter-spacing:0.29px">GBLON0001-</span><span style="letter-spacing:-0.20px">...</span></div></div>
<div class="a cell" style="left:926.0px;width:110.6px"><div class="dot bl"></div><div class="t " style="top:2.2px;font-size:12.5px;left:16.6px"><span style="letter-spacing:-0.23px">DEMO_TOPO</span><span style="letter-spacing:-0.20px">...</span></div></div>
<div class="a cell" style="left:1036.0px;width:110.6px"></div>
<div class="a cell" style="left:1146.0px;width:122.1px;border-right:none"><div class="t " style="top:2.2px;font-size:12.5px;left:3.5px"><span style="letter-spacing:0.15px">GBLON0001.ASR9K</span></div></div>
</div>
<div class="a row alt" style="top:150.82px;width:1267.5px">
<div class="a cell" style="left:0.2px;width:28.4px"><div class="a cb"></div></div>
<div class="a cell" style="left:28.0px;width:55.5px"><svg class="a" style="left:20.5px;top:4px" width="16" height="17" viewBox="0 0 16 17"><path d="M1.600 1.600h6.400l3.400 3.400v3M6.500 14.400h-4.900v-12.800" fill="#fff" stroke="#979797" stroke-width="1.100"/><path d="M8 1.600v3.400h3.400" fill="none" stroke="#9a9a9a" stroke-width="1"/><path d="M6.800 16l.8-3 4.200-4.600c.7-.7 1.700-.7 2.400 0s.7 1.700 0 2.400l-4.400 4.400z" fill="#4a86c8"/><path d="M6.800 16l.6-2 1.400 1.400z" fill="#2d5f9e"/></svg></div>
<div class="a cell" style="left:82.9px;width:95.5px"><div class="t " style="top:2.2px;font-size:12.5px;left:2.6px"><span style="letter-spacing:-0.74px">F</span></div></div>
<div class="a cell" style="left:177.8px;width:121.6px"><div class="t " style="top:2.2px;font-size:12.5px;left:3.5px"><span style="letter-spacing:0.56px">/15&amp;16 (SC/PC)</span></div></div>
<div class="a cell" style="left:298.8px;width:147.8px"></div>
<div class="a cell" style="left:446.0px;width:150.8px"></div>
<div class="a cell" style="left:596.2px;width:110.6px"></div>
<div class="a cell" style="left:706.2px;width:110.6px"></div>
<div class="a cell" style="left:816.2px;width:110.4px"></div>
<div class="a cell" style="left:926.0px;width:110.6px"></div>
<div class="a cell" style="left:1036.0px;width:110.6px"></div>
<div class="a cell" style="left:1146.0px;width:122.1px;border-right:none"><div class="t " style="top:2.2px;font-size:12.5px;left:3.5px"><span style="letter-spacing:0.31px">GBLON0001 ODF/01</span></div></div>
</div>
<div class="a row" style="top:171.68px;width:1267.5px">
<div class="a cell" style="left:0.2px;width:28.4px"><div class="a cb"></div></div>
<div class="a cell" style="left:28.0px;width:55.5px"><svg class="a" style="left:20.5px;top:4px" width="16" height="17" viewBox="0 0 16 17"><path d="M1.600 1.600h6.400l3.400 3.400v3M6.500 14.400h-4.900v-12.800" fill="#fff" stroke="#979797" stroke-width="1.100"/><path d="M8 1.600v3.400h3.400" fill="none" stroke="#9a9a9a" stroke-width="1"/><path d="M6.800 16l.8-3 4.200-4.600c.7-.7 1.700-.7 2.400 0s.7 1.700 0 2.400l-4.400 4.400z" fill="#4a86c8"/><path d="M6.800 16l.6-2 1.400 1.400z" fill="#2d5f9e"/></svg></div>
<div class="a cell" style="left:82.9px;width:95.5px"><div class="t " style="top:2.2px;font-size:12.5px;left:2.6px"><span style="letter-spacing:-0.11px">B</span></div></div>
<div class="a cell" style="left:177.8px;width:121.6px"><div class="t " style="top:2.2px;font-size:12.5px;left:3.5px"><span style="letter-spacing:0.56px">/17&amp;18 (SC/PC)</span></div></div>
<div class="a cell" style="left:298.8px;width:147.8px"></div>
<div class="a cell" style="left:446.0px;width:150.8px"></div>
<div class="a cell" style="left:596.2px;width:110.6px"></div>
<div class="a cell" style="left:706.2px;width:110.6px"></div>
<div class="a cell" style="left:816.2px;width:110.4px"></div>
<div class="a cell" style="left:926.0px;width:110.6px"></div>
<div class="a cell" style="left:1036.0px;width:110.6px"></div>
<div class="a cell" style="left:1146.0px;width:122.1px;border-right:none"><div class="t " style="top:2.2px;font-size:12.5px;left:3.5px"><span style="letter-spacing:0.31px">GBLON0001 ODF/01</span></div></div>
</div>
<div class="a row alt" style="top:192.54px;width:1267.5px">
<div class="a cell" style="left:0.2px;width:28.4px"><div class="a cb"></div></div>
<div class="a cell" style="left:28.0px;width:55.5px"><svg class="a" style="left:20.5px;top:4px" width="16" height="17" viewBox="0 0 16 17"><path d="M1.600 1.600h6.400l3.400 3.400v3M6.500 14.400h-4.900v-12.800" fill="#fff" stroke="#979797" stroke-width="1.100"/><path d="M8 1.600v3.400h3.400" fill="none" stroke="#9a9a9a" stroke-width="1"/><path d="M6.800 16l.8-3 4.200-4.600c.7-.7 1.700-.7 2.400 0s.7 1.700 0 2.400l-4.400 4.400z" fill="#4a86c8"/><path d="M6.800 16l.6-2 1.400 1.400z" fill="#2d5f9e"/></svg></div>
<div class="a cell" style="left:82.9px;width:95.5px"><div class="t " style="top:2.2px;font-size:12.5px;left:2.6px"><span style="letter-spacing:-0.74px">F</span></div></div>
<div class="a cell" style="left:177.8px;width:121.6px"><div class="t " style="top:2.2px;font-size:12.5px;left:3.5px"><span style="letter-spacing:0.56px">/17&amp;18 (SC/PC)</span></div></div>
<div class="a cell" style="left:298.8px;width:147.8px"><div class="dot g"></div><div class="t " style="top:2.2px;font-size:12.5px;left:16.6px"><span style="letter-spacing:0.13px">GBLON0001-GBLO</span><span style="letter-spacing:-0.20px">...</span></div></div>
<div class="a cell" style="left:446.0px;width:150.8px"><div class="t " style="top:2.2px;font-size:12.5px;right:1.9px"><span style="letter-spacing:0.68px">1</span></div></div>
<div class="a cell" style="left:596.2px;width:110.6px"><div class="bar" style="background:#0433ff"></div></div>
<div class="a cell" style="left:706.2px;width:110.6px"><div class="bar" style="background:#0433ff"></div></div>
<div class="a cell" style="left:816.2px;width:110.4px"><div class="dot g"></div><div class="t " style="top:2.2px;font-size:12.5px;left:16.6px"><span style="letter-spacing:0.29px">GBLON0001-</span><span style="letter-spacing:-0.20px">...</span></div></div>
<div class="a cell" style="left:926.0px;width:110.6px"><div class="dot bl"></div><div class="t " style="top:2.2px;font-size:12.5px;left:16.6px"><span style="letter-spacing:0.29px">GBLON0001-</span><span style="letter-spacing:-0.20px">...</span></div></div>
<div class="a cell" style="left:1036.0px;width:110.6px"></div>
<div class="a cell" style="left:1146.0px;width:122.1px;border-right:none"><div class="t " style="top:2.2px;font-size:12.5px;left:3.5px"><span style="letter-spacing:0.26px">GBLON0001.WDM00</span></div></div>
</div>
<div class="a row" style="top:213.40px;width:1267.5px">
<div class="a cell" style="left:0.2px;width:28.4px"><div class="a cb"></div></div>
<div class="a cell" style="left:28.0px;width:55.5px"><svg class="a" style="left:20.5px;top:4px" width="16" height="17" viewBox="0 0 16 17"><path d="M1.600 1.600h6.400l3.400 3.400v3M6.500 14.400h-4.900v-12.800" fill="#fff" stroke="#979797" stroke-width="1.100"/><path d="M8 1.600v3.400h3.400" fill="none" stroke="#9a9a9a" stroke-width="1"/><path d="M6.800 16l.8-3 4.200-4.600c.7-.7 1.700-.7 2.400 0s.7 1.700 0 2.400l-4.400 4.400z" fill="#4a86c8"/><path d="M6.800 16l.6-2 1.400 1.400z" fill="#2d5f9e"/></svg></div>
<div class="a cell" style="left:82.9px;width:95.5px"><div class="t " style="top:2.2px;font-size:12.5px;left:2.6px"><span style="letter-spacing:-0.11px">B</span></div></div>
<div class="a cell" style="left:177.8px;width:121.6px"><div class="t " style="top:2.2px;font-size:12.5px;left:3.5px"><span style="letter-spacing:0.56px">/19&amp;20 (SC/PC)</span></div></div>
<div class="a cell" style="left:298.8px;width:147.8px"></div>
<div class="a cell" style="left:446.0px;width:150.8px"></div>
<div class="a cell" style="left:596.2px;width:110.6px"></div>
<div class="a cell" style="left:706.2px;width:110.6px"></div>
<div class="a cell" style="left:816.2px;width:110.4px"><div class="dot g"></div><div class="t " style="top:2.2px;font-size:12.5px;left:16.6px"><span style="letter-spacing:0.29px">GBLON0001-</span><span style="letter-spacing:-0.20px">...</span></div></div>
<div class="a cell" style="left:926.0px;width:110.6px"></div>
<div class="a cell" style="left:1036.0px;width:110.6px"></div>
<div class="a cell" style="left:1146.0px;width:122.1px;border-right:none"></div>
</div>
<div class="a row alt" style="top:234.26px;width:1267.5px">
<div class="a cell" style="left:0.2px;width:28.4px"><div class="a cb"></div></div>
<div class="a cell" style="left:28.0px;width:55.5px"><svg class="a" style="left:20.5px;top:4px" width="16" height="17" viewBox="0 0 16 17"><path d="M1.600 1.600h6.400l3.400 3.400v3M6.500 14.400h-4.900v-12.800" fill="#fff" stroke="#979797" stroke-width="1.100"/><path d="M8 1.600v3.400h3.400" fill="none" stroke="#9a9a9a" stroke-width="1"/><path d="M6.800 16l.8-3 4.200-4.600c.7-.7 1.700-.7 2.400 0s.7 1.700 0 2.400l-4.400 4.400z" fill="#4a86c8"/><path d="M6.800 16l.6-2 1.400 1.400z" fill="#2d5f9e"/></svg></div>
<div class="a cell" style="left:82.9px;width:95.5px"><div class="t " style="top:2.2px;font-size:12.5px;left:2.6px"><span style="letter-spacing:-0.74px">F</span></div></div>
<div class="a cell" style="left:177.8px;width:121.6px"><div class="t " style="top:2.2px;font-size:12.5px;left:3.5px"><span style="letter-spacing:0.56px">/19&amp;20 (SC/PC)</span></div></div>
<div class="a cell" style="left:298.8px;width:147.8px"></div>
<div class="a cell" style="left:446.0px;width:150.8px"></div>
<div class="a cell" style="left:596.2px;width:110.6px"></div>
<div class="a cell" style="left:706.2px;width:110.6px"></div>
<div class="a cell" style="left:816.2px;width:110.4px"></div>
<div class="a cell" style="left:926.0px;width:110.6px"></div>
<div class="a cell" style="left:1036.0px;width:110.6px"></div>
<div class="a cell" style="left:1146.0px;width:122.1px;border-right:none"></div>
</div>
<div class="a row" style="top:255.12px;width:1267.5px">
<div class="a cell" style="left:0.2px;width:28.4px"><div class="a cb"></div></div>
<div class="a cell" style="left:28.0px;width:55.5px"><svg class="a" style="left:20.5px;top:4px" width="16" height="17" viewBox="0 0 16 17"><path d="M1.600 1.600h6.400l3.400 3.400v3M6.500 14.400h-4.900v-12.800" fill="#fff" stroke="#979797" stroke-width="1.100"/><path d="M8 1.600v3.400h3.400" fill="none" stroke="#9a9a9a" stroke-width="1"/><path d="M6.800 16l.8-3 4.200-4.600c.7-.7 1.700-.7 2.400 0s.7 1.700 0 2.400l-4.400 4.400z" fill="#4a86c8"/><path d="M6.800 16l.6-2 1.400 1.400z" fill="#2d5f9e"/></svg></div>
<div class="a cell" style="left:82.9px;width:95.5px"><div class="t " style="top:2.2px;font-size:12.5px;left:2.6px"><span style="letter-spacing:-0.11px">B</span></div></div>
<div class="a cell" style="left:177.8px;width:121.6px"><div class="t " style="top:2.2px;font-size:12.5px;left:3.5px"><span style="letter-spacing:0.56px">/21&amp;22 (SC/PC)</span></div></div>
<div class="a cell" style="left:298.8px;width:147.8px"><div class="dot g"></div><div class="t " style="top:2.2px;font-size:12.5px;left:16.6px"><span style="letter-spacing:0.13px">GBLON0001-GBLO</span><span style="letter-spacing:-0.20px">...</span></div></div>
<div class="a cell" style="left:446.0px;width:150.8px"><div class="t " style="top:2.2px;font-size:12.5px;right:1.9px"><span style="letter-spacing:0.68px">21</span></div></div>
<div class="a cell" style="left:596.2px;width:110.6px"><div class="bar" style="background:#ff9300"></div></div>
<div class="a cell" style="left:706.2px;width:110.6px"><div class="bar" style="background:#fffb00"></div></div>
<div class="a cell" style="left:816.2px;width:110.4px"><div class="dot g"></div><div class="t " style="top:2.2px;font-size:12.5px;left:16.6px"><span style="letter-spacing:0.29px">GBLON0001-</span><span style="letter-spacing:-0.20px">...</span></div></div>
<div class="a cell" style="left:926.0px;width:110.6px"></div>
<div class="a cell" style="left:1036.0px;width:110.6px"></div>
<div class="a cell" style="left:1146.0px;width:122.1px;border-right:none"></div>
</div>
<div class="a row alt" style="top:275.98px;width:1267.5px">
<div class="a cell" style="left:0.2px;width:28.4px"><div class="a cb"></div></div>
<div class="a cell" style="left:28.0px;width:55.5px"><svg class="a" style="left:20.5px;top:4px" width="16" height="17" viewBox="0 0 16 17"><path d="M1.600 1.600h6.400l3.400 3.400v3M6.500 14.400h-4.900v-12.800" fill="#fff" stroke="#979797" stroke-width="1.100"/><path d="M8 1.600v3.400h3.400" fill="none" stroke="#9a9a9a" stroke-width="1"/><path d="M6.800 16l.8-3 4.200-4.600c.7-.7 1.700-.7 2.400 0s.7 1.700 0 2.400l-4.400 4.400z" fill="#4a86c8"/><path d="M6.800 16l.6-2 1.400 1.400z" fill="#2d5f9e"/></svg></div>
<div class="a cell" style="left:82.9px;width:95.5px"><div class="t " style="top:2.2px;font-size:12.5px;left:2.6px"><span style="letter-spacing:-0.74px">F</span></div></div>
<div class="a cell" style="left:177.8px;width:121.6px"><div class="t " style="top:2.2px;font-size:12.5px;left:3.5px"><span style="letter-spacing:0.56px">/21&amp;22 (SC/PC)</span></div></div>
<div class="a cell" style="left:298.8px;width:147.8px"></div>
<div class="a cell" style="left:446.0px;width:150.8px"></div>
<div class="a cell" style="left:596.2px;width:110.6px"></div>
<div class="a cell" style="left:706.2px;width:110.6px"></div>
<div class="a cell" style="left:816.2px;width:110.4px"></div>
<div class="a cell" style="left:926.0px;width:110.6px"></div>
<div class="a cell" style="left:1036.0px;width:110.6px"></div>
<div class="a cell" style="left:1146.0px;width:122.1px;border-right:none"></div>
</div>
<div class="a row" style="top:296.84px;width:1267.5px">
<div class="a cell" style="left:0.2px;width:28.4px"><div class="a cb"></div></div>
<div class="a cell" style="left:28.0px;width:55.5px"><svg class="a" style="left:20.5px;top:4px" width="16" height="17" viewBox="0 0 16 17"><path d="M1.600 1.600h6.400l3.400 3.400v3M6.500 14.400h-4.900v-12.800" fill="#fff" stroke="#979797" stroke-width="1.100"/><path d="M8 1.600v3.400h3.400" fill="none" stroke="#9a9a9a" stroke-width="1"/><path d="M6.800 16l.8-3 4.200-4.600c.7-.7 1.700-.7 2.400 0s.7 1.700 0 2.400l-4.400 4.400z" fill="#4a86c8"/><path d="M6.800 16l.6-2 1.400 1.400z" fill="#2d5f9e"/></svg></div>
<div class="a cell" style="left:82.9px;width:95.5px"><div class="t " style="top:2.2px;font-size:12.5px;left:2.6px"><span style="letter-spacing:-0.11px">B</span></div></div>
<div class="a cell" style="left:177.8px;width:121.6px"><div class="t " style="top:2.2px;font-size:12.5px;left:3.5px"><span style="letter-spacing:0.56px">/23&amp;24 (SC/PC)</span></div></div>
<div class="a cell" style="left:298.8px;width:147.8px"><div class="dot g"></div><div class="t " style="top:2.2px;font-size:12.5px;left:16.6px"><span style="letter-spacing:0.13px">GBLON0001-GBLO</span><span style="letter-spacing:-0.20px">...</span></div></div>
<div class="a cell" style="left:446.0px;width:150.8px"><div class="t " style="top:2.2px;font-size:12.5px;right:1.9px"><span style="letter-spacing:0.68px">23</span></div></div>
<div class="a cell" style="left:596.2px;width:110.6px"><div class="bar" style="background:#ff9300"></div></div>
<div class="a cell" style="left:706.2px;width:110.6px"><div class="bar" style="background:#ff96ca"></div></div>
<div class="a cell" style="left:816.2px;width:110.4px"><div class="dot g"></div><div class="t " style="top:2.2px;font-size:12.5px;left:16.6px"><span style="letter-spacing:0.29px">GBLON0001-</span><span style="letter-spacing:-0.20px">...</span></div></div>
<div class="a cell" style="left:926.0px;width:110.6px"></div>
<div class="a cell" style="left:1036.0px;width:110.6px"></div>
<div class="a cell" style="left:1146.0px;width:122.1px;border-right:none"></div>
</div>
<div class="a row alt" style="top:317.70px;width:1267.5px">
<div class="a cell" style="left:0.2px;width:28.4px"><div class="a cb"></div></div>
<div class="a cell" style="left:28.0px;width:55.5px"><svg class="a" style="left:20.5px;top:4px" width="16" height="17" viewBox="0 0 16 17"><path d="M1.600 1.600h6.400l3.400 3.400v3M6.500 14.400h-4.900v-12.800" fill="#fff" stroke="#979797" stroke-width="1.100"/><path d="M8 1.600v3.400h3.400" fill="none" stroke="#9a9a9a" stroke-width="1"/><path d="M6.800 16l.8-3 4.200-4.600c.7-.7 1.700-.7 2.400 0s.7 1.700 0 2.400l-4.400 4.400z" fill="#4a86c8"/><path d="M6.800 16l.6-2 1.400 1.400z" fill="#2d5f9e"/></svg></div>
<div class="a cell" style="left:82.9px;width:95.5px"><div class="t " style="top:2.2px;font-size:12.5px;left:2.6px"><span style="letter-spacing:-0.74px">F</span></div></div>
<div class="a cell" style="left:177.8px;width:121.6px"><div class="t " style="top:2.2px;font-size:12.5px;left:3.5px"><span style="letter-spacing:0.56px">/23&amp;24 (SC/PC)</span></div></div>
<div class="a cell" style="left:298.8px;width:147.8px"></div>
<div class="a cell" style="left:446.0px;width:150.8px"></div>
<div class="a cell" style="left:596.2px;width:110.6px"></div>
<div class="a cell" style="left:706.2px;width:110.6px"></div>
<div class="a cell" style="left:816.2px;width:110.4px"></div>
<div class="a cell" style="left:926.0px;width:110.6px"></div>
<div class="a cell" style="left:1036.0px;width:110.6px"></div>
<div class="a cell" style="left:1146.0px;width:122.1px;border-right:none"></div>
</div>
<div class="a row" style="top:338.56px;width:1267.5px">
<div class="a cell" style="left:0.2px;width:28.4px"><div class="a cb"></div></div>
<div class="a cell" style="left:28.0px;width:55.5px"><svg class="a" style="left:20.5px;top:4px" width="16" height="17" viewBox="0 0 16 17"><path d="M1.600 1.600h6.400l3.400 3.400v3M6.500 14.400h-4.900v-12.800" fill="#fff" stroke="#979797" stroke-width="1.100"/><path d="M8 1.600v3.400h3.400" fill="none" stroke="#9a9a9a" stroke-width="1"/><path d="M6.800 16l.8-3 4.200-4.600c.7-.7 1.700-.7 2.400 0s.7 1.700 0 2.400l-4.400 4.400z" fill="#4a86c8"/><path d="M6.800 16l.6-2 1.400 1.400z" fill="#2d5f9e"/></svg></div>
<div class="a cell" style="left:82.9px;width:95.5px"><div class="t " style="top:2.2px;font-size:12.5px;left:2.6px"><span style="letter-spacing:-0.11px">B</span></div></div>
<div class="a cell" style="left:177.8px;width:121.6px"><div class="t " style="top:2.2px;font-size:12.5px;left:3.5px"><span style="letter-spacing:0.56px">/25&amp;26 (SC/PC)</span></div></div>
<div class="a cell" style="left:298.8px;width:147.8px"><div class="dot g"></div><div class="t " style="top:2.2px;font-size:12.5px;left:16.6px"><span style="letter-spacing:0.13px">GBLON0001-GBLO</span><span style="letter-spacing:-0.20px">...</span></div></div>
<div class="a cell" style="left:446.0px;width:150.8px"><div class="t " style="top:2.2px;font-size:12.5px;right:1.9px"><span style="letter-spacing:0.68px">25</span></div></div>
<div class="a cell" style="left:596.2px;width:110.6px"><div class="bar" style="background:#339966"></div></div>
<div class="a cell" style="left:706.2px;width:110.6px"><div class="bar" style="background:#0433ff"></div></div>
<div class="a cell" style="left:816.2px;width:110.4px"><div class="dot g"></div><div class="t " style="top:2.2px;font-size:12.5px;left:16.6px"><span style="letter-spacing:0.29px">GBLON0001-</span><span style="letter-spacing:-0.20px">...</span></div></div>
<div class="a cell" style="left:926.0px;width:110.6px"></div>
<div class="a cell" style="left:1036.0px;width:110.6px"></div>
<div class="a cell" style="left:1146.0px;width:122.1px;border-right:none"></div>
</div>
<div class="a row alt" style="top:359.42px;width:1267.5px">
<div class="a cell" style="left:0.2px;width:28.4px"><div class="a cb"></div></div>
<div class="a cell" style="left:28.0px;width:55.5px"><svg class="a" style="left:20.5px;top:4px" width="16" height="17" viewBox="0 0 16 17"><path d="M1.600 1.600h6.400l3.400 3.400v3M6.500 14.400h-4.900v-12.800" fill="#fff" stroke="#979797" stroke-width="1.100"/><path d="M8 1.600v3.400h3.400" fill="none" stroke="#9a9a9a" stroke-width="1"/><path d="M6.800 16l.8-3 4.200-4.600c.7-.7 1.700-.7 2.400 0s.7 1.700 0 2.400l-4.400 4.400z" fill="#4a86c8"/><path d="M6.800 16l.6-2 1.400 1.400z" fill="#2d5f9e"/></svg></div>
<div class="a cell" style="left:82.9px;width:95.5px"><div class="t " style="top:2.2px;font-size:12.5px;left:2.6px"><span style="letter-spacing:-0.74px">F</span></div></div>
<div class="a cell" style="left:177.8px;width:121.6px"><div class="t " style="top:2.2px;font-size:12.5px;left:3.5px"><span style="letter-spacing:0.56px">/25&amp;26 (SC/PC)</span></div></div>
<div class="a cell" style="left:298.8px;width:147.8px"></div>
<div class="a cell" style="left:446.0px;width:150.8px"></div>
<div class="a cell" style="left:596.2px;width:110.6px"></div>
<div class="a cell" style="left:706.2px;width:110.6px"></div>
<div class="a cell" style="left:816.2px;width:110.4px"></div>
<div class="a cell" style="left:926.0px;width:110.6px"></div>
<div class="a cell" style="left:1036.0px;width:110.6px"></div>
<div class="a cell" style="left:1146.0px;width:122.1px;border-right:none"></div>
</div>
<div class="a row" style="top:380.28px;width:1267.5px">
<div class="a cell" style="left:0.2px;width:28.4px"><div class="a cb"></div></div>
<div class="a cell" style="left:28.0px;width:55.5px"><svg class="a" style="left:20.5px;top:4px" width="16" height="17" viewBox="0 0 16 17"><path d="M1.600 1.600h6.400l3.400 3.400v3M6.500 14.400h-4.900v-12.800" fill="#fff" stroke="#979797" stroke-width="1.100"/><path d="M8 1.600v3.400h3.400" fill="none" stroke="#9a9a9a" stroke-width="1"/><path d="M6.800 16l.8-3 4.200-4.600c.7-.7 1.700-.7 2.400 0s.7 1.700 0 2.400l-4.400 4.400z" fill="#4a86c8"/><path d="M6.800 16l.6-2 1.400 1.400z" fill="#2d5f9e"/></svg></div>
<div class="a cell" style="left:82.9px;width:95.5px"><div class="t " style="top:2.2px;font-size:12.5px;left:2.6px"><span style="letter-spacing:-0.11px">B</span></div></div>
<div class="a cell" style="left:177.8px;width:121.6px"><div class="t " style="top:2.2px;font-size:12.5px;left:3.5px"><span style="letter-spacing:0.56px">/27&amp;28 (SC/PC)</span></div></div>
<div class="a cell" style="left:298.8px;width:147.8px"></div>
<div class="a cell" style="left:446.0px;width:150.8px"></div>
<div class="a cell" style="left:596.2px;width:110.6px"></div>
<div class="a cell" style="left:706.2px;width:110.6px"></div>
<div class="a cell" style="left:816.2px;width:110.4px"><div class="dot bl"></div><div class="t " style="top:2.2px;font-size:12.5px;left:16.6px"><span style="letter-spacing:0.29px">GBLON0001-</span><span style="letter-spacing:-0.20px">...</span></div></div>
<div class="a cell" style="left:926.0px;width:110.6px"></div>
<div class="a cell" style="left:1036.0px;width:110.6px"></div>
<div class="a cell" style="left:1146.0px;width:122.1px;border-right:none"><div class="t " style="top:2.2px;font-size:12.5px;left:3.5px"><span style="letter-spacing:0.24px">GBLON0001.J001.F</span></div></div>
</div>
</div>
<div class="a" style="left:1494px;top:130px;width:14px;height:387px;background:#fafafa"></div>
<div class="a" style="left:1498.5px;top:195px;width:7px;height:145px;background:#c1c1c1;border-radius:4px"></div>
<div class="a" style="left:226.5px;top:518.5px;width:1281.5px;height:10px;background:#fafafa"></div>
<div class="a" style="left:230.3px;top:523.8px;width:985px;height:7px;background:#c1c1c1;border-radius:4px"></div>
<div class="a" style="left:214px;top:533px;width:1302px;height:18px;background:#d0dcee;border-bottom:1px solid #8796b0"></div>
<div class="a" style="left:861px;top:545px;width:14px;height:2px;border-top:2px dotted #8a9bb8"></div>
<div class="a" style="left:214px;top:551px;width:1302px;height:156px;background:#fff"></div>
<div class="a" style="left:220px;top:549px;width:1px;height:158px;background:#8fa3c4"></div>
<div class="a" style="left:224px;top:580.5px;width:1290px;height:1px;background:#8c9ab3"></div>
<div class="a" style="left:223.1px;top:581px;width:1px;height:124px;background:#97a3b9"></div>
<div class="a" style="left:224.3px;top:553.8px;width:133.500px;height:28.200px;background:#fff;border:1px solid #a3b4d0;border-bottom:none"></div>
<div class="t hd" style="top:562.3px;font-size:12.5px;left:233.8px"><span style="letter-spacing:0.36px">Related shelves</span></div>
<svg class="a" style="left:335.3px;top:563px" width="15" height="14" viewBox="0 0 15 14"><path d="M8.600 10.700A4.700 4.700 0 1 1 10.700 6.200" fill="none" stroke="#000" stroke-width="2.100"/><path d="M7.700 4.700l6.200-.2-3 4.900z" fill="#000"/></svg>
<div class="a" style="left:357.3px;top:553.8px;width:85px;height:26.700px;background:#b4c9e4;border:1px solid #9db1cf;border-bottom:none"></div>
<div class="t hd" style="top:560.2px;font-size:12.5px;left:366.3px"><span style="letter-spacing:0.72px">History (1)</span></div>
<div class="a" style="left:226.5px;top:583.5px;width:1281.5px;height:115px;background:#fff"></div>
<div class="a" style="left:226.0px;top:583.5px;width:1px;height:115px;background:#a3b3cf"></div>
<div class="a gh" style="left:226.7px;top:582.9px;width:55.6px;height:30.100px"></div>
<div class="t hd" style="top:591.1px;font-size:12.5px;left:234.89999999999998px"><span style="letter-spacing:2.86px">#</span></div>
<div class="a gh" style="left:281.7px;top:582.9px;width:110.6px;height:30.100px"></div>
<div class="t hd" style="top:591.1px;font-size:12.5px;left:288.9px"><span style="letter-spacing:0.39px">DdfOdf Descr</span><span style="letter-spacing:-0.20px">...</span></div>
<div class="a gh" style="left:391.7px;top:582.9px;width:110.6px;height:30.100px"></div>
<div class="t hd" style="top:591.1px;font-size:12.5px;left:398.9px"><span style="letter-spacing:0.32px">Rack Name</span></div>
<div class="a gh" style="left:501.7px;top:582.9px;width:110.6px;height:30.100px"></div>
<div class="t hd" style="top:591.1px;font-size:12.5px;left:508.9px"><span style="letter-spacing:0.19px">RackSide</span></div>
<div class="a gh" style="left:611.7px;top:582.9px;width:110.6px;height:30.100px"></div>
<div class="t hd" style="top:591.1px;font-size:12.5px;left:618.9000000000001px"><span style="letter-spacing:0.02px">DdfRackYPos</span></div>
<div class="a gh" style="left:721.7px;top:582.9px;width:110.6px;height:30.100px"></div>
<div class="t hd" style="top:591.1px;font-size:12.5px;left:728.9000000000001px"><span style="letter-spacing:0.54px">Comments</span></div>
<div class="a gh" style="left:831.7px;top:582.9px;width:110.6px;height:30.100px"></div>
<div class="t hd" style="top:591.1px;font-size:12.5px;left:838.9000000000001px"><span style="letter-spacing:0.29px">Sequence</span></div>
<div class="a gh" style="left:941.7px;top:582.9px;width:110.6px;height:30.100px"></div>
<div class="t hd" style="top:591.1px;font-size:12.5px;left:948.9000000000001px"><span style="letter-spacing:0.08px">FreeBackPos</span></div>
<div class="a gh" style="left:1051.7px;top:582.9px;width:110.6px;height:30.100px"></div>
<div class="t hd" style="top:591.1px;font-size:12.5px;left:1058.9px"><span style="letter-spacing:0.19px">FreeFrontPos</span></div>
<div class="a gh" style="left:1161.7px;top:582.9px;width:110.6px;height:30.100px"></div>
<div class="t hd" style="top:591.1px;font-size:12.5px;left:1168.9px"><span style="letter-spacing:0.07px">UsedBackPos</span></div>
<div class="a gh" style="left:1271.7px;top:582.9px;width:110.6px;height:30.100px"></div>
<div class="t hd" style="top:591.1px;font-size:12.5px;left:1278.9px"><span style="letter-spacing:0.18px">UsedFrontPos</span></div>
<div class="a gh" style="left:1381.7px;top:582.9px;width:110.4px;height:30.100px"></div>
<div class="t hd" style="top:591.1px;font-size:12.5px;left:1388.9px"><span style="letter-spacing:0.26px">PercentageU</span><span style="letter-spacing:-0.20px">...</span></div>
<div class="a" style="left:281.2px;top:582.9px;width:1px;height:30.100px;background:#8f9dba"></div>
<div class="a" style="left:391.2px;top:582.9px;width:1px;height:30.100px;background:#8f9dba"></div>
<div class="a" style="left:501.2px;top:582.9px;width:1px;height:30.100px;background:#8f9dba"></div>
<div class="a" style="left:611.2px;top:582.9px;width:1px;height:30.100px;background:#8f9dba"></div>
<div class="a" style="left:721.2px;top:582.9px;width:1px;height:30.100px;background:#8f9dba"></div>
<div class="a" style="left:831.2px;top:582.9px;width:1px;height:30.100px;background:#8f9dba"></div>
<div class="a" style="left:941.2px;top:582.9px;width:1px;height:30.100px;background:#8f9dba"></div>
<div class="a" style="left:1051.2px;top:582.9px;width:1px;height:30.100px;background:#8f9dba"></div>
<div class="a" style="left:1161.2px;top:582.9px;width:1px;height:30.100px;background:#8f9dba"></div>
<div class="a" style="left:1271.2px;top:582.9px;width:1px;height:30.100px;background:#8f9dba"></div>
<div class="a" style="left:1381.2px;top:582.9px;width:1px;height:30.100px;background:#8f9dba"></div>
<div class="a" style="left:1491.0px;top:582.9px;width:1px;height:30.100px;background:#8f9dba"></div>
<div class="a fi" style="left:284.3px;top:616.0px;width:87.6px"></div>
<svg class="a" style="left:376.9px;top:622.0px" width="9" height="10" viewBox="0 0 9 10"><path d="M.6 1.6h7.800L5.200 5.300v3.900h-1.400V5.300z" fill="#2f4566"/><ellipse cx="4.500" cy="1.700" rx="3.900" ry="1.500" fill="#33496b"/><ellipse cx="4.500" cy="1.500" rx="2.300" ry=".7" fill="#94a4bd"/></svg>
<div class="a fi" style="left:394.3px;top:616.0px;width:87.6px"></div>
<svg class="a" style="left:486.9px;top:622.0px" width="9" height="10" viewBox="0 0 9 10"><path d="M.6 1.6h7.800L5.200 5.300v3.900h-1.400V5.300z" fill="#2f4566"/><ellipse cx="4.500" cy="1.700" rx="3.900" ry="1.500" fill="#33496b"/><ellipse cx="4.500" cy="1.500" rx="2.300" ry=".7" fill="#94a4bd"/></svg>
<div class="a fi" style="left:504.3px;top:616.0px;width:104.40000000000006px"></div>
<div class="a" style="left:590.7px;top:617.0px;width:17px;height:21px;background:linear-gradient(#d6e1f1,#bccde6);border-left:1px solid #a9b9d3"></div>
<svg class="a" style="left:595.2px;top:625.0px" width="8" height="5" viewBox="0 0 8 5"><path d="M0 0h8l-4 4.500z" fill="#4c6690"/></svg>
<div class="a fi" style="left:614.3000000000001px;top:616.0px;width:87.6px"></div>
<svg class="a" style="left:706.9000000000001px;top:622.0px" width="9" height="10" viewBox="0 0 9 10"><path d="M.6 1.6h7.800L5.200 5.300v3.900h-1.400V5.300z" fill="#2f4566"/><ellipse cx="4.500" cy="1.700" rx="3.900" ry="1.500" fill="#33496b"/><ellipse cx="4.500" cy="1.500" rx="2.300" ry=".7" fill="#94a4bd"/></svg>
<div class="a fi" style="left:724.3000000000001px;top:616.0px;width:87.6px"></div>
<svg class="a" style="left:816.9000000000001px;top:622.0px" width="9" height="10" viewBox="0 0 9 10"><path d="M.6 1.6h7.800L5.200 5.300v3.900h-1.400V5.300z" fill="#2f4566"/><ellipse cx="4.500" cy="1.700" rx="3.900" ry="1.500" fill="#33496b"/><ellipse cx="4.500" cy="1.500" rx="2.300" ry=".7" fill="#94a4bd"/></svg>
<div class="a fi" style="left:834.3000000000001px;top:616.0px;width:87.6px"></div>
<svg class="a" style="left:926.9000000000001px;top:622.0px" width="9" height="10" viewBox="0 0 9 10"><path d="M.6 1.6h7.800L5.200 5.300v3.900h-1.400V5.300z" fill="#2f4566"/><ellipse cx="4.500" cy="1.700" rx="3.900" ry="1.500" fill="#33496b"/><ellipse cx="4.500" cy="1.500" rx="2.300" ry=".7" fill="#94a4bd"/></svg>
<div class="a fi" style="left:944.3000000000001px;top:616.0px;width:87.6px"></div>
<svg class="a" style="left:1036.9px;top:622.0px" width="9" height="10" viewBox="0 0 9 10"><path d="M.6 1.6h7.800L5.200 5.300v3.900h-1.400V5.300z" fill="#2f4566"/><ellipse cx="4.500" cy="1.700" rx="3.900" ry="1.500" fill="#33496b"/><ellipse cx="4.500" cy="1.500" rx="2.300" ry=".7" fill="#94a4bd"/></svg>
<div class="a fi" style="left:1054.3px;top:616.0px;width:87.6px"></div>
<svg class="a" style="left:1146.9px;top:622.0px" width="9" height="10" viewBox="0 0 9 10"><path d="M.6 1.6h7.800L5.200 5.300v3.900h-1.400V5.300z" fill="#2f4566"/><ellipse cx="4.500" cy="1.700" rx="3.900" ry="1.500" fill="#33496b"/><ellipse cx="4.500" cy="1.500" rx="2.300" ry=".7" fill="#94a4bd"/></svg>
<div class="a fi" style="left:1164.3px;top:616.0px;width:87.6px"></div>
<svg class="a" style="left:1256.9px;top:622.0px" width="9" height="10" viewBox="0 0 9 10"><path d="M.6 1.6h7.800L5.200 5.300v3.900h-1.400V5.300z" fill="#2f4566"/><ellipse cx="4.500" cy="1.700" rx="3.900" ry="1.500" fill="#33496b"/><ellipse cx="4.500" cy="1.500" rx="2.300" ry=".7" fill="#94a4bd"/></svg>
<div class="a fi" style="left:1274.3px;top:616.0px;width:87.6px"></div>
<svg class="a" style="left:1366.9px;top:622.0px" width="9" height="10" viewBox="0 0 9 10"><path d="M.6 1.6h7.800L5.200 5.300v3.900h-1.400V5.300z" fill="#2f4566"/><ellipse cx="4.500" cy="1.700" rx="3.900" ry="1.500" fill="#33496b"/><ellipse cx="4.500" cy="1.500" rx="2.300" ry=".7" fill="#94a4bd"/></svg>
<div class="a" style="left:226.5px;top:641.8px;width:1265.0px;height:1px;background:#9a9a8c"></div>
<div class="a" style="left:226.5px;top:642.7px;width:1265.0px;height:20.400px;background:#faecb4;border-bottom:1px solid #e3dcc0"></div>
<div class="a cell" style="left:226.7px;top:642.7px;width:55.6px;height:19.600px;border-right-color:#e4d9ad"><svg class="a" style="left:20px;top:3.8px" width="16" height="17" viewBox="0 0 16 17"><path d="M1.600 1.600h6.400l3.400 3.400v3M6.500 14.400h-4.900v-12.800" fill="#fff" stroke="#979797" stroke-width="1.100"/><path d="M8 1.600v3.400h3.400" fill="none" stroke="#9a9a9a" stroke-width="1"/><path d="M6.800 16l.8-3 4.200-4.600c.7-.7 1.700-.7 2.400 0s.7 1.700 0 2.400l-4.400 4.400z" fill="#4a86c8"/><path d="M6.800 16l.6-2 1.400 1.400z" fill="#2d5f9e"/></svg></div>
<div class="a cell" style="left:281.7px;top:642.7px;width:110.6px;height:19.600px;border-right-color:#e4d9ad"></div>
<div class="a cell" style="left:391.7px;top:642.7px;width:110.6px;height:19.600px;border-right-color:#e4d9ad"><div class="dot bl" style="top:5.600px"></div><div class="t " style="top:2.1px;font-size:12.5px;left:16.6px"><span style="letter-spacing:0.11px">ODF01</span></div></div>
<div class="a cell" style="left:501.7px;top:642.7px;width:110.6px;height:19.600px;border-right-color:#e4d9ad"><div class="t " style="top:2.1px;font-size:12.5px;left:3.5px"><span style="letter-spacing:-0.40px">FRONT</span></div></div>
<div class="a cell" style="left:611.7px;top:642.7px;width:110.6px;height:19.600px;border-right-color:#e4d9ad"><div class="t " style="top:2.1px;font-size:12.5px;right:2.2px"><span style="letter-spacing:0.68px">2201</span></div></div>
<div class="a cell" style="left:721.7px;top:642.7px;width:110.6px;height:19.600px;border-right-color:#e4d9ad"></div>
<div class="a cell" style="left:831.7px;top:642.7px;width:110.6px;height:19.600px;border-right-color:#e4d9ad"><div class="t " style="top:2.1px;font-size:12.5px;right:2.2px"><span style="letter-spacing:0.68px">1</span></div></div>
<div class="a cell" style="left:941.7px;top:642.7px;width:110.6px;height:19.600px;border-right-color:#e4d9ad"><div class="t " style="top:2.1px;font-size:12.5px;right:2.2px"><span style="letter-spacing:0.68px">10</span></div></div>
<div class="a cell" style="left:1051.7px;top:642.7px;width:110.6px;height:19.600px;border-right-color:#e4d9ad"><div class="t " style="top:2.1px;font-size:12.5px;right:2.2px"><span style="letter-spacing:0.68px">19</span></div></div>
<div class="a cell" style="left:1161.7px;top:642.7px;width:110.6px;height:19.600px;border-right-color:#e4d9ad"><div class="t " style="top:2.1px;font-size:12.5px;right:2.2px"><span style="letter-spacing:0.68px">14</span></div></div>
<div class="a cell" style="left:1271.7px;top:642.7px;width:110.6px;height:19.600px;border-right-color:#e4d9ad"><div class="t " style="top:2.1px;font-size:12.5px;right:2.2px"><span style="letter-spacing:0.68px">5</span></div></div>
<div class="a cell" style="left:1381.7px;top:642.7px;width:110.4px;height:19.600px;border-right-color:#e4d9ad"></div>
<div class="a" style="left:1382.2px;top:643.6px;width:109.300px;height:17.800px;border:1px solid #a4abb8;background:linear-gradient(90deg,#c3cedd 0,#d6dde8 40%,#e4e4e4 40.100%,#ececec 100%)"></div>
<div class="a" style="left:1415px;top:645.9px;width:43px;height:14px;border-radius:3.500px;background:#676b71;color:#fff;font-size:11.500px;line-height:14.400px;text-align:center;letter-spacing:.67px;padding-left:.6px">40%</div>
<div class="a" style="left:226.5px;top:663.5px;width:1281.5px;height:26px;background:#e3ecf8"></div>
<div class="a" style="left:226.5px;top:689.5px;width:1281.5px;height:10px;background:#fafafa"></div>
<div class="a" style="left:760px;top:692px;width:747px;height:7px;background:#c1c1c1;border-radius:4px"></div>
<div class="a red" style="left:2px;top:31.2px;width:202.300px;height:149.300px"></div>
<div class="a red" style="left:2px;top:186.7px;width:202.300px;height:516.300px"></div>
<div class="a red" style="left:213px;top:31.2px;width:1299px;height:499.700px"></div>
<div class="a red4" style="left:212.2px;top:535.2px;width:1301.300px;height:169.300px"></div>
<div class="a blue" style="left:298.2px;top:65.3px;width:102.300px;height:450px"></div>
<div class="a blue" style="left:400px;top:65.3px;width:119.300px;height:450px"></div>
<svg class="a" style="left:336px;top:92px;filter:drop-shadow(2px 3px 1.2px rgba(0,0,0,.7))" width="44" height="48" viewBox="0 0 44 48"><text x="6.700" y="37.700" font-family="Liberation Sans" font-weight="bold" font-size="39" fill="#fff" stroke="#fff" stroke-width="7.500" stroke-linejoin="round">A</text></svg>
<svg class="a" style="left:336px;top:92px" width="44" height="48" viewBox="0 0 44 48"><text x="6.700" y="37.700" font-family="Liberation Sans" font-weight="bold" font-size="39" fill="#000" stroke="#000" stroke-width="1.100" stroke-linejoin="round">A</text></svg>
<svg class="a" style="left:438.6px;top:92px;filter:drop-shadow(2px 3px 1.2px rgba(0,0,0,.7))" width="44" height="48" viewBox="0 0 44 48"><text x="6.700" y="37.700" font-family="Liberation Sans" font-weight="bold" font-size="39" fill="#fff" stroke="#fff" stroke-width="7.500" stroke-linejoin="round">B</text></svg>
<svg class="a" style="left:438.6px;top:92px" width="44" height="48" viewBox="0 0 44 48"><text x="6.700" y="37.700" font-family="Liberation Sans" font-weight="bold" font-size="39" fill="#000" stroke="#000" stroke-width="1.100" stroke-linejoin="round">B</text></svg>
<div class="a circ" style="left:151.8px;top:45.800000000000004px"><b>1</b></div>
<div class="a circ" style="left:151.8px;top:197.9px"><b>2</b></div>
<div class="a circ" style="left:1456.3px;top:45.800000000000004px"><b>3</b></div>
<div class="a circ" style="left:1456.3px;top:549.6px"><b>4</b></div>
</div>
</body></html>
